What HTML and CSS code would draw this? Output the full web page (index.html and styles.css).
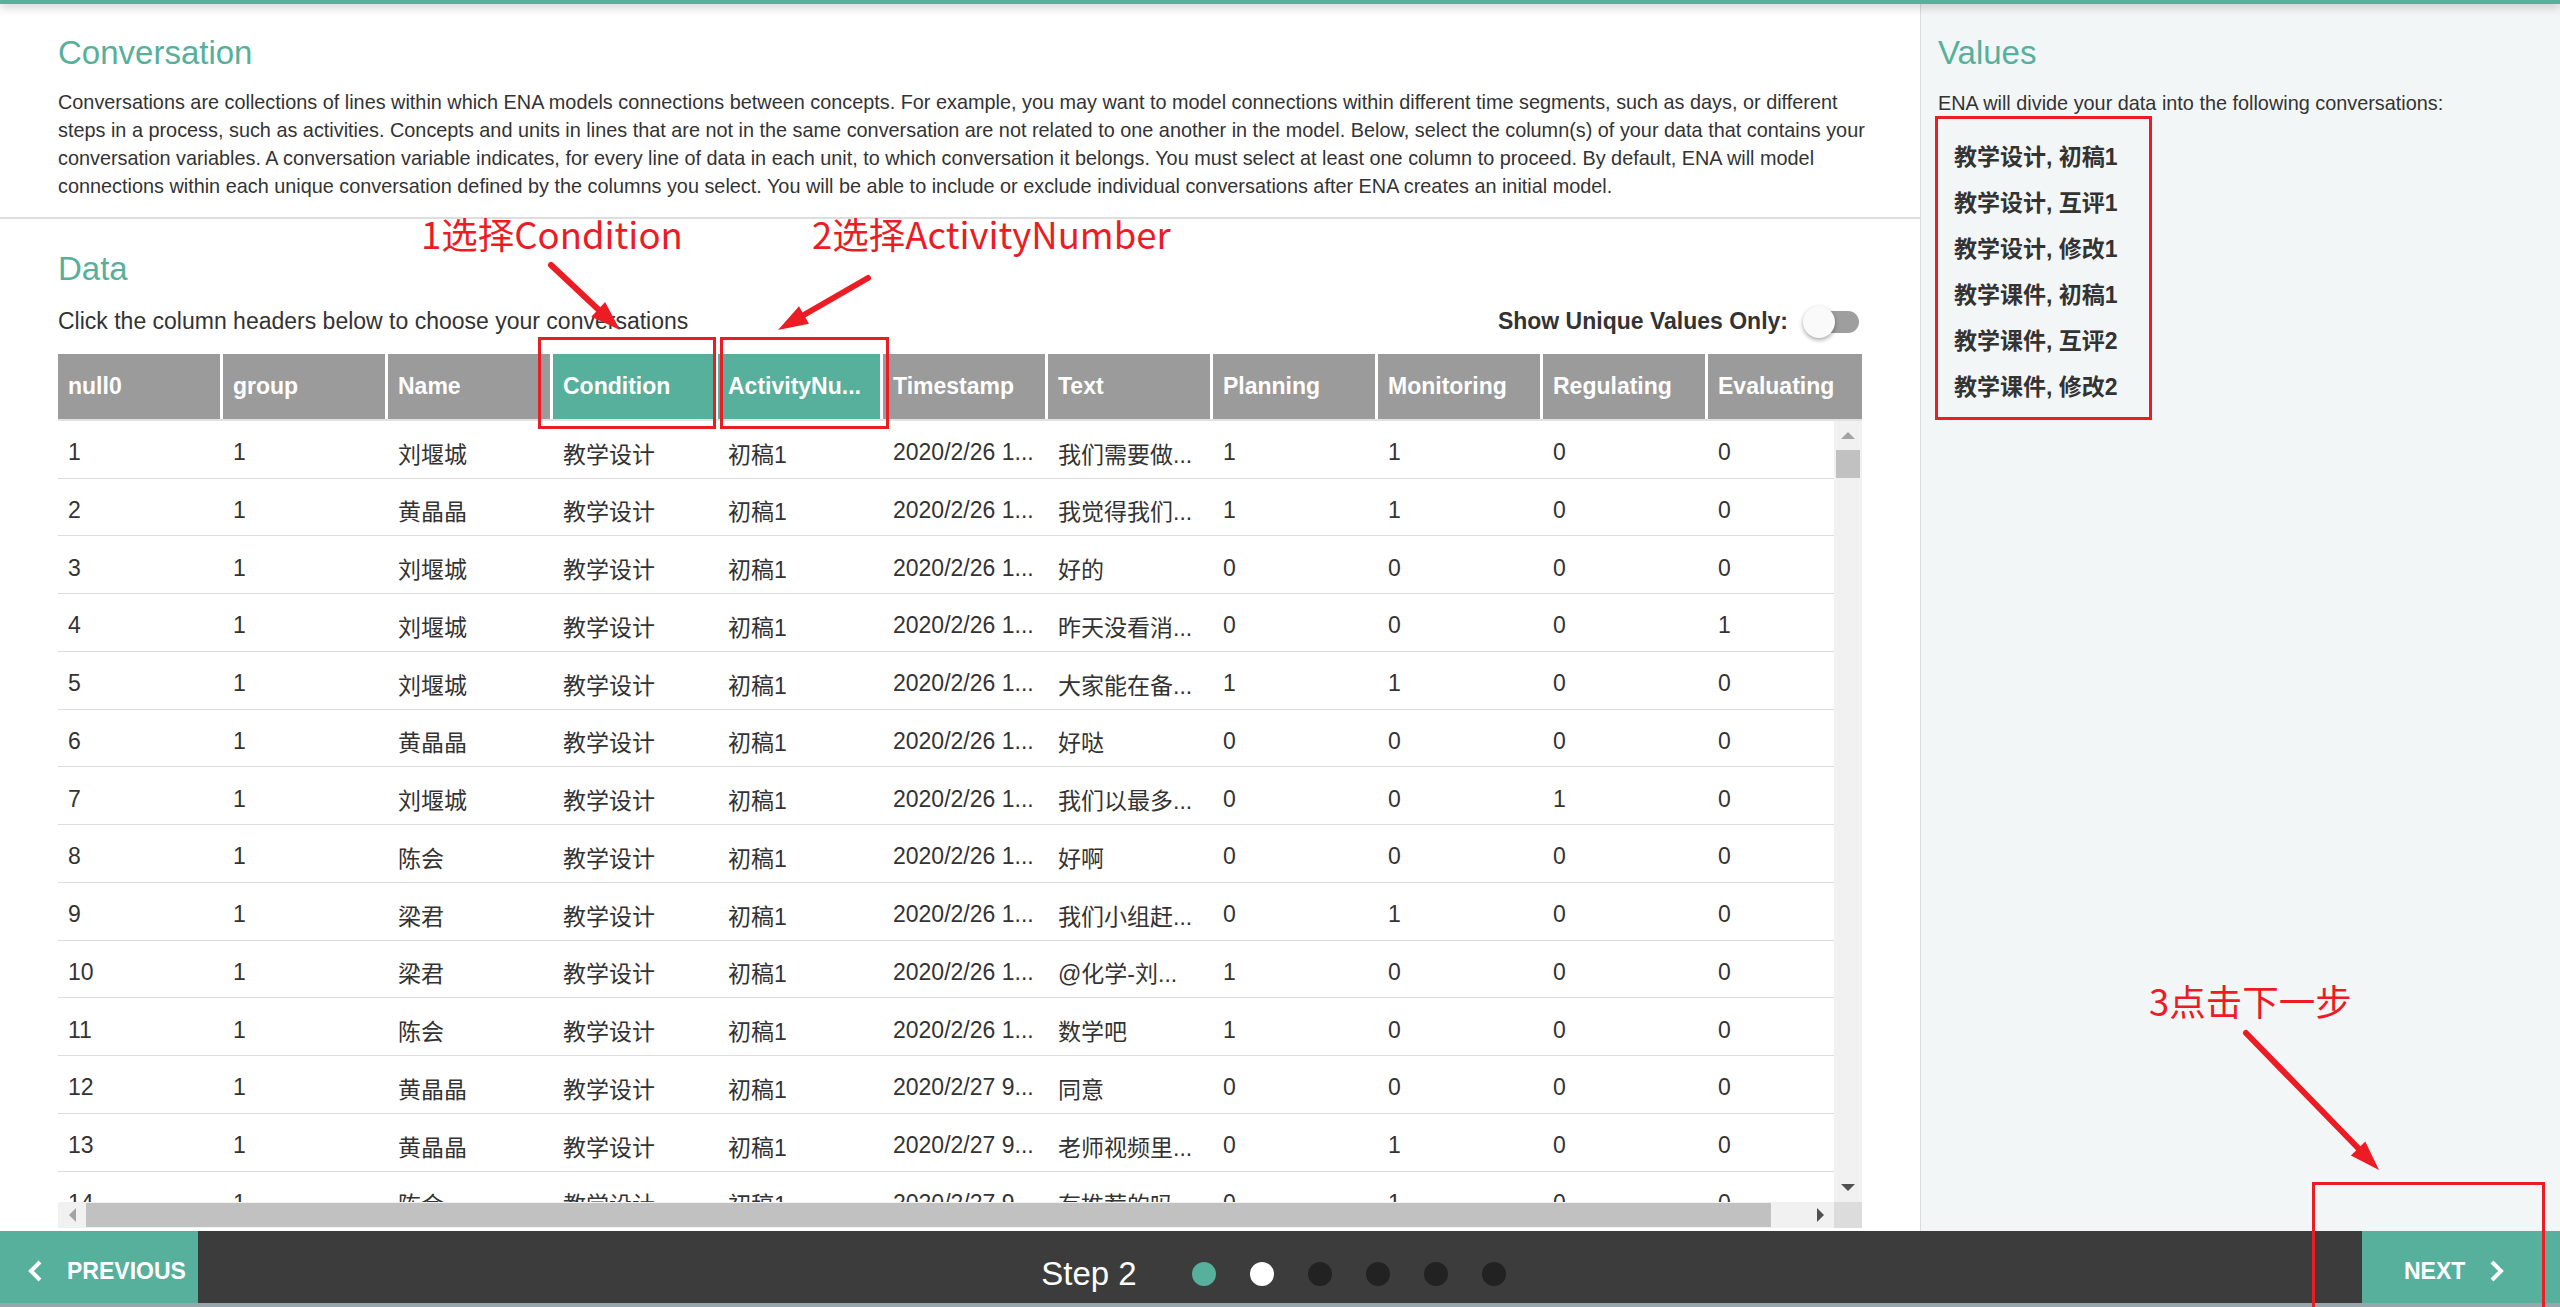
FILE: index.html
```html
<!DOCTYPE html>
<html lang="zh-CN">
<head>
<meta charset="utf-8">
<title>ENA - Conversation</title>
<link rel="stylesheet" href="styles.css">
</head>
<body>
<div class="app">
  <div class="topbar"></div>
  <div class="workspace">
    <main class="main">
      <section class="intro">
        <h1 class="title">Conversation</h1>
        <p class="desc">Conversations are collections of lines within which ENA models connections between concepts. For example, you may want to model connections within different time segments, such as days, or different steps in a process, such as activities. Concepts and units in lines that are not in the same conversation are not related to one another in the model. Below, select the column(s) of your data that contains your conversation variables. A conversation variable indicates, for every line of data in each unit, to which conversation it belongs. You must select at least one column to proceed. By default, ENA will model connections within each unique conversation defined by the columns you select. You will be able to include or exclude individual conversations after ENA creates an initial model.</p>
      </section>
      <section class="data">
        <h2 class="title">Data</h2>
        <div class="toolbar">
          <span class="hint">Click the column headers below to choose your conversations</span>
          <div class="unique">
            <span class="unique-label">Show Unique Values Only:</span>
            <span class="switch"><span class="switch-track"></span><span class="switch-knob"></span></span>
          </div>
        </div>
        <div class="grid">
          <div class="thead">
            <div class="th">null0</div>
            <div class="th">group</div>
            <div class="th">Name</div>
            <div class="th sel">Condition</div>
            <div class="th sel">ActivityNu...</div>
            <div class="th">Timestamp</div>
            <div class="th">Text</div>
            <div class="th">Planning</div>
            <div class="th">Monitoring</div>
            <div class="th">Regulating</div>
            <div class="th">Evaluating</div>
          </div>
          <div class="tbody">
            <div class="tr"><div class="td">1</div><div class="td">1</div><div class="td">刘堰城</div><div class="td">教学设计</div><div class="td">初稿1</div><div class="td">2020/2/26 1...</div><div class="td">我们需要做...</div><div class="td">1</div><div class="td">1</div><div class="td">0</div><div class="td">0</div></div>
            <div class="tr"><div class="td">2</div><div class="td">1</div><div class="td">黄晶晶</div><div class="td">教学设计</div><div class="td">初稿1</div><div class="td">2020/2/26 1...</div><div class="td">我觉得我们...</div><div class="td">1</div><div class="td">1</div><div class="td">0</div><div class="td">0</div></div>
            <div class="tr"><div class="td">3</div><div class="td">1</div><div class="td">刘堰城</div><div class="td">教学设计</div><div class="td">初稿1</div><div class="td">2020/2/26 1...</div><div class="td">好的</div><div class="td">0</div><div class="td">0</div><div class="td">0</div><div class="td">0</div></div>
            <div class="tr"><div class="td">4</div><div class="td">1</div><div class="td">刘堰城</div><div class="td">教学设计</div><div class="td">初稿1</div><div class="td">2020/2/26 1...</div><div class="td">昨天没看消...</div><div class="td">0</div><div class="td">0</div><div class="td">0</div><div class="td">1</div></div>
            <div class="tr"><div class="td">5</div><div class="td">1</div><div class="td">刘堰城</div><div class="td">教学设计</div><div class="td">初稿1</div><div class="td">2020/2/26 1...</div><div class="td">大家能在备...</div><div class="td">1</div><div class="td">1</div><div class="td">0</div><div class="td">0</div></div>
            <div class="tr"><div class="td">6</div><div class="td">1</div><div class="td">黄晶晶</div><div class="td">教学设计</div><div class="td">初稿1</div><div class="td">2020/2/26 1...</div><div class="td">好哒</div><div class="td">0</div><div class="td">0</div><div class="td">0</div><div class="td">0</div></div>
            <div class="tr"><div class="td">7</div><div class="td">1</div><div class="td">刘堰城</div><div class="td">教学设计</div><div class="td">初稿1</div><div class="td">2020/2/26 1...</div><div class="td">我们以最多...</div><div class="td">0</div><div class="td">0</div><div class="td">1</div><div class="td">0</div></div>
            <div class="tr"><div class="td">8</div><div class="td">1</div><div class="td">陈会</div><div class="td">教学设计</div><div class="td">初稿1</div><div class="td">2020/2/26 1...</div><div class="td">好啊</div><div class="td">0</div><div class="td">0</div><div class="td">0</div><div class="td">0</div></div>
            <div class="tr"><div class="td">9</div><div class="td">1</div><div class="td">梁君</div><div class="td">教学设计</div><div class="td">初稿1</div><div class="td">2020/2/26 1...</div><div class="td">我们小组赶...</div><div class="td">0</div><div class="td">1</div><div class="td">0</div><div class="td">0</div></div>
            <div class="tr"><div class="td">10</div><div class="td">1</div><div class="td">梁君</div><div class="td">教学设计</div><div class="td">初稿1</div><div class="td">2020/2/26 1...</div><div class="td">@化学-刘...</div><div class="td">1</div><div class="td">0</div><div class="td">0</div><div class="td">0</div></div>
            <div class="tr"><div class="td">11</div><div class="td">1</div><div class="td">陈会</div><div class="td">教学设计</div><div class="td">初稿1</div><div class="td">2020/2/26 1...</div><div class="td">数学吧</div><div class="td">1</div><div class="td">0</div><div class="td">0</div><div class="td">0</div></div>
            <div class="tr"><div class="td">12</div><div class="td">1</div><div class="td">黄晶晶</div><div class="td">教学设计</div><div class="td">初稿1</div><div class="td">2020/2/27 9...</div><div class="td">同意</div><div class="td">0</div><div class="td">0</div><div class="td">0</div><div class="td">0</div></div>
            <div class="tr"><div class="td">13</div><div class="td">1</div><div class="td">黄晶晶</div><div class="td">教学设计</div><div class="td">初稿1</div><div class="td">2020/2/27 9...</div><div class="td">老师视频里...</div><div class="td">0</div><div class="td">1</div><div class="td">0</div><div class="td">0</div></div>
            <div class="tr"><div class="td">14</div><div class="td">1</div><div class="td">陈会</div><div class="td">教学设计</div><div class="td">初稿1</div><div class="td">2020/2/27 9...</div><div class="td">有推荐的吗</div><div class="td">0</div><div class="td">1</div><div class="td">0</div><div class="td">0</div></div>
          </div>
          <div class="vscroll">
            <div class="sb-btn"><span class="tri tri-up"></span></div>
            <div class="vthumb"></div>
            <div class="sb-fill"></div>
            <div class="sb-btn"><span class="tri tri-down"></span></div>
          </div>
          <div class="hscroll">
            <div class="sb-btn h"><span class="tri tri-left"></span></div>
            <div class="hthumb"></div>
            <div class="sb-fill"></div>
            <div class="sb-btn h"><span class="tri tri-right"></span></div>
          </div>
          <div class="corner"></div>
        </div>
      </section>
    </main>
    <aside class="side">
      <h2 class="title">Values</h2>
      <p class="side-desc">ENA will divide your data into the following conversations:</p>
      <ul class="values">
        <li>教学设计, 初稿1</li>
        <li>教学设计, 互评1</li>
        <li>教学设计, 修改1</li>
        <li>教学课件, 初稿1</li>
        <li>教学课件, 互评2</li>
        <li>教学课件, 修改2</li>
      </ul>
    </aside>
  </div>
  <footer class="footer">
    <div class="nav-btn prev">
      <svg class="chev" width="16" height="22" viewBox="0 0 16 22"><path d="M13 2 L4 11 L13 20" fill="none" stroke="#fff" stroke-width="4"/></svg>
      <span>PREVIOUS</span>
    </div>
    <div class="steps">
      <span class="step-label">Step 2</span>
      <span class="dot done"></span>
      <span class="dot current"></span>
      <span class="dot"></span>
      <span class="dot"></span>
      <span class="dot"></span>
      <span class="dot"></span>
    </div>
    <div class="nav-btn next">
      <span>NEXT</span>
      <svg class="chev" width="16" height="22" viewBox="0 0 16 22"><path d="M3 2 L12 11 L3 20" fill="none" stroke="#fff" stroke-width="4"/></svg>
    </div>
  </footer>
  <div class="taskbar"></div>

  <div class="notes">
    <svg class="notes-svg" width="2560" height="1307" viewBox="0 0 2560 1307">
      <g fill="none" stroke="#ec1c24" stroke-width="3">
        <rect x="539.5" y="338.5" width="175" height="89"/>
        <rect x="721.5" y="338.5" width="166" height="89"/>
        <rect x="1936.5" y="117.5" width="214" height="301"/>
        <rect x="2313.5" y="1183.5" width="230" height="140"/>
      </g>
      <g stroke="#ec1c24" stroke-width="6" stroke-linecap="round">
        <line x1="551" y1="265" x2="601" y2="312"/>
        <line x1="868" y1="278" x2="802" y2="316"/>
        <line x1="2246" y1="1033" x2="2360" y2="1150"/>
      </g>
      <g fill="#ec1c24">
        <polygon points="620,330 591.3,316.7 605.1,302.1"/>
        <polygon points="778,330 799,306.3 809,323.7"/>
        <polygon points="2379,1170 2350.9,1155.5 2365.3,1141.5"/>
      </g>
    </svg>
    <div class="note note-1">1选择Condition</div>
    <div class="note note-2">2选择ActivityNumber</div>
    <div class="note note-3">3点击下一步</div>
  </div>
</div>
</body>
</html>
```
FILE: styles.css
```css
* { box-sizing: border-box; }
html, body { margin: 0; padding: 0; }
body {
  width: 2560px;
  height: 1307px;
  overflow: hidden;
  background: #fff;
  color: #333;
  font-family: "Liberation Sans", Arial, "Noto Sans CJK SC", sans-serif;
}
.app {
  position: relative;
  width: 2560px;
  height: 1307px;
  display: flex;
  flex-direction: column;
}
.topbar {
  height: 4px;
  background: #56b09c;
  box-shadow: 0 2px 10px rgba(0,0,0,0.35);
  position: relative;
  z-index: 2;
}
.workspace {
  display: flex;
  height: 1227px;
}
.main {
  width: 1920px;
  flex: 0 0 1920px;
  overflow: hidden;
}
.title {
  margin: 0;
  font-weight: normal;
  font-size: 33px;
  line-height: 38px;
  color: #56b09c;
}
.intro {
  padding: 30px 40px 16px 58px;
  border-bottom: 2px solid #dedede;
}
.desc, .side-desc {
  margin: 15.5px 0 0;
  font-size: 19.85px;
  line-height: 28.33px;
  color: #333;
}
.data {
  padding: 31px 58px 0 58px;
}
.toolbar {
  margin-top: 11px;
  height: 46px;
  display: flex;
  align-items: center;
  justify-content: space-between;
}
.hint {
  font-size: 23px;
  color: #333;
}
.unique {
  display: flex;
  align-items: center;
  gap: 15px;
  margin-right: 3px;
}
.unique-label {
  font-size: 23px;
  font-weight: bold;
  color: #333;
}
.switch {
  position: relative;
  width: 56px;
  height: 32px;
  display: block;
}
.switch-track {
  position: absolute;
  left: 17px;
  top: 5px;
  width: 39px;
  height: 22px;
  border-radius: 11px;
  background: #9e9e9e;
}
.switch-knob {
  position: absolute;
  left: 0;
  top: 0;
  width: 32px;
  height: 32px;
  border-radius: 50%;
  background: #fafafa;
  box-shadow: 0 2px 4px rgba(0,0,0,0.35);
}

/* table grid */
.grid {
  margin-top: 9px;
  display: grid;
  grid-template-columns: 1fr 28px;
  grid-template-rows: 67px 781px 26px;
}
.thead {
  grid-column: 1 / 3;
  display: flex;
  overflow: hidden;
  border-bottom: 2px solid #e2e2e2;
}
.th {
  flex: 0 0 165px;
  width: 165px;
  height: 65px;
  line-height: 65px;
  padding: 0 10px;
  background: #9b9b9b;
  color: #fff;
  font-size: 23px;
  font-weight: bold;
  border-right: 3px solid #fff;
  white-space: nowrap;
  overflow: hidden;
}
.th.sel { background: #56b09c; }
.tbody {
  overflow: hidden;
}
.tr {
  display: flex;
  height: 57.75px;
  border-bottom: 1px solid #dcdcdc;
  width: 1815px;
}
.td {
  flex: 0 0 165px;
  width: 165px;
  padding: 7px 10px 0;
  display: flex;
  align-items: center;
  font-size: 23px;
  color: #333;
  white-space: nowrap;
  overflow: hidden;
}
.vscroll {
  background: #f1f1f1;
  display: flex;
  flex-direction: column;
}
.sb-btn {
  flex: 0 0 29px;
  display: flex;
  align-items: center;
  justify-content: center;
}
.sb-btn.h { flex: 0 0 28px; }
.sb-fill { flex: 1; }
.vthumb {
  flex: 0 0 28px;
  margin: 0 2px;
  background: #c1c1c1;
}
.hscroll {
  background: #f1f1f1;
  display: flex;
}
.hthumb {
  flex: 0 0 1685px;
  margin: 1px 0;
  background: #c1c1c1;
}
.corner { background: #dcdcdc; }
.tri { width: 0; height: 0; display: block; }
.tri-up { border-left: 7px solid transparent; border-right: 7px solid transparent; border-bottom: 7px solid #a3a3a3; }
.tri-down { border-left: 7px solid transparent; border-right: 7px solid transparent; border-top: 7px solid #505050; }
.tri-left { border-top: 7px solid transparent; border-bottom: 7px solid transparent; border-right: 7px solid #a3a3a3; }
.tri-right { border-top: 7px solid transparent; border-bottom: 7px solid transparent; border-left: 7px solid #505050; }

/* sidebar */
.side {
  flex: 1;
  background: #f3f6f7;
  border-left: 1px solid #d8dcdd;
  padding: 30px 18px 0 17px;
}
.side-desc { margin-top: 17px; }
.values {
  list-style: none;
  margin: 16.7px 0 0;
  padding: 0 0 0 16px;
}
.values li {
  font-size: 23px;
  line-height: 46px;
  font-weight: bold;
  color: #333;
}

/* footer */
.footer {
  height: 72px;
  display: flex;
  background: #3c3c3c;
}
.nav-btn {
  flex: 0 0 198px;
  background: #56b09c;
  color: #fff;
  font-size: 23px;
  font-weight: bold;
  display: flex;
  align-items: center;
  gap: 24px;
  padding-top: 8px;
}
.nav-btn.prev { padding-left: 27px; }
.nav-btn.next { padding-left: 42px; }
.chev { display: block; }
.steps {
  flex: 1;
  display: flex;
  align-items: center;
  justify-content: center;
  padding-top: 14px;
  padding-left: 4px;
}
.step-label {
  color: #fff;
  font-size: 33px;
  line-height: 38px;
  margin-right: 38px;
}
.dot {
  width: 24px;
  height: 24px;
  border-radius: 50%;
  margin: 0 17px;
  background: #222;
}
.dot.done { background: #56b09c; }
.dot.current { background: #fff; }
.taskbar {
  height: 4px;
  background: #97a6ad;
}

/* annotations overlay */
.notes {
  position: absolute;
  left: 0;
  top: 0;
  width: 2560px;
  height: 1307px;
  pointer-events: none;
  z-index: 5;
}
.notes-svg { position: absolute; left: 0; top: 0; }
.note {
  position: absolute;
  color: #ec1c24;
  font-family: "Noto Sans CJK SC", sans-serif;
  font-size: 36.5px;
  line-height: 40px;
  white-space: nowrap;
}
.note-1 { left: 421px; top: 214px; }
.note-2 { left: 812px; top: 214px; }
.note-3 { left: 2149px; top: 981px; }
```
